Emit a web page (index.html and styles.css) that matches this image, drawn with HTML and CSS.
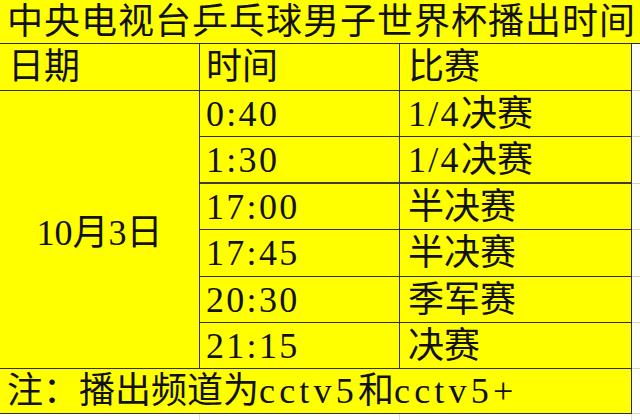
FILE: index.html
```html
<!DOCTYPE html>
<html lang="zh-CN">
<head>
<meta charset="utf-8">
<title>中央电视台乒乓球男子世界杯播出时间</title>
<link rel="stylesheet" href="styles.css">
</head>
<body>
<div class="sheet">
  <div class="title">中央电视台乒乓球男子世界杯播出时间</div>
  <div class="grid">
    <div class="cell head c1">日期</div>
    <div class="cell head c2">时间</div>
    <div class="cell head c3">比赛</div>
    <div class="blank"></div>

    <div class="cell date">10月3日</div>
    <div class="cell c2 lat">0:40</div>
    <div class="cell c3"><span class="lat">1/4</span>决赛</div>
    <div class="blank"></div>

    <div class="cell c2 lat thick">1:30</div>
    <div class="cell c3 thick"><span class="lat">1/4</span>决赛</div>
    <div class="blank"></div>

    <div class="cell c2 lat">17:00</div>
    <div class="cell c3">半决赛</div>
    <div class="blank"></div>

    <div class="cell c2 lat">17:45</div>
    <div class="cell c3">半决赛</div>
    <div class="blank"></div>

    <div class="cell c2 lat">20:30</div>
    <div class="cell c3">季军赛</div>
    <div class="blank"></div>

    <div class="cell c2 lat">21:15</div>
    <div class="cell c3">决赛</div>
    <div class="blank"></div>

    <div class="cell note">注：播出频道为<span class="lat wide">cctv5</span>和<span class="lat wide">cctv5+</span></div>
    <div class="blank"></div>

    <div class="foot"></div>
    <div class="foot"></div>
    <div class="foot"></div>
    <div class="foot last"></div>
  </div>
</div>
</body>
</html>
```
FILE: styles.css
```css
html, body {
  margin: 0;
  padding: 0;
  background: #ffffff;
}

.sheet {
  width: 640px;
  height: 420px;
  overflow: hidden;
  font-family: "Liberation Serif", "Noto Sans CJK SC", serif;
  font-size: 36px;
  line-height: 1;
  color: #111111;
}

.title {
  height: 44px;
  box-sizing: border-box;
  background: #ffff00;
  border-bottom: 1px solid #2e2e2e;
  display: flex;
  align-items: center;
  padding-left: 7px;
  letter-spacing: 1px;
  white-space: nowrap;
}

.grid {
  display: grid;
  grid-template-columns: 200px 200px 232px 8px;
  grid-template-rows: 47px 46px 47px 46px 47px 46px 46px 45px 6px;
}

.cell {
  box-sizing: border-box;
  background: #ffff00;
  border-right: 1px solid #2e2e2e;
  border-bottom: 1px solid #2e2e2e;
  display: flex;
  align-items: center;
  white-space: nowrap;
}

.c1 { padding-left: 8px; }
.c2 { padding-left: 6px; }
.c3 { padding-left: 8px; }

.thick {
  border-bottom: 2px solid #3c3c3c;
}

.date {
  grid-row: 2 / 8;
  grid-column: 1;
  justify-content: center;
  padding-top: 6px;
}

.note {
  grid-column: 1 / 4;
  padding-left: 7px;
}

.lat {
  letter-spacing: 2.3px;
}

.lat.wide {
  letter-spacing: 4.2px;
}

.blank {
  box-sizing: border-box;
  border-bottom: 1px solid #d6d6d6;
}

.foot {
  box-sizing: border-box;
  border-right: 1px solid #dcdcdc;
}

.foot.last {
  border-right: none;
}
```
